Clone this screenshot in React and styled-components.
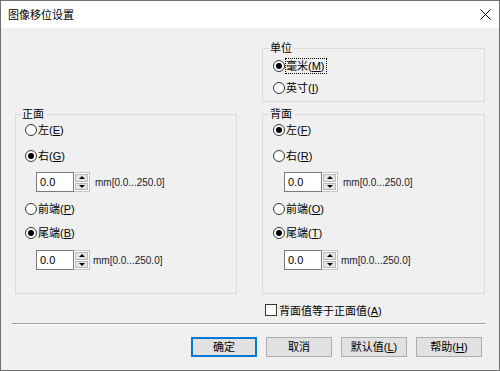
import React from "react";
import styled, { createGlobalStyle } from "styled-components";

const GlobalStyle = createGlobalStyle`
  html, body {
    margin: 0;
    padding: 0;
    background: #ffffff;
  }
  body {
    font-family: "Liberation Sans", "Noto Sans CJK SC", sans-serif;
    font-size: 11px;
    color: #000;
  }
`;

const Window = styled.div`
  width: 500px;
  height: 371px;
  box-sizing: border-box;
  border: 1px solid #707070;
  background: #f0f0f0;
  display: flex;
  flex-direction: column;
`;

const TitleBar = styled.div`
  height: 27px;
  background: #fff;
  display: flex;
  align-items: center;
  justify-content: space-between;
  padding: 0 8px 0 7px;
`;

const Title = styled.span`
  font-size: 11px;
  line-height: 14px;
`;

const Body = styled.div`
  padding: 13px 14px 0 14px;
`;

const Columns = styled.div`
  display: grid;
  grid-template-columns: 222px 223px;
  grid-template-rows: auto auto auto;
  column-gap: 25px;
  row-gap: 5px;
`;

const Group = styled.fieldset`
  margin: 0;
  min-width: 0;
  box-sizing: border-box;
  border: 1px solid #dcdcdc;
  padding: ${(p) => p.$pt}px 6px ${(p) => p.$pb}px ${(p) => p.$inset}px;
  display: flex;
  flex-direction: column;
  align-items: flex-start;
  grid-column: ${(p) => p.$col};
  grid-row: ${(p) => p.$row};
`;

const Legend = styled.legend`
  padding: 0 2px 0 1px;
  margin-left: -4px;
  line-height: 14px;
  font-size: 11px;
`;

const RadioRow = styled.div`
  display: flex;
  align-items: center;
  height: 16px;
  margin-top: ${(p) => p.$mt || 0}px;
`;

const RadioMark = styled.span`
  width: 12px;
  height: 12px;
  box-sizing: border-box;
  border: 1px solid #333;
  border-radius: 50%;
  background: #fff;
  display: flex;
  align-items: center;
  justify-content: center;
  &::after {
    content: "";
    width: 6px;
    height: 6px;
    border-radius: 50%;
    background: #000;
    display: ${(p) => (p.$checked ? "block" : "none")};
  }
`;

const OptionText = styled.span`
  margin-left: 1px;
  line-height: 14px;
  padding: 0 1px 0 0;
  outline: ${(p) => (p.$focus ? "1px dotted #000" : "none")};
  outline-offset: 0;
`;

const InputRow = styled.div`
  display: flex;
  align-items: center;
  margin-left: 11px;
  margin-top: ${(p) => p.$mt}px;
`;

const TextField = styled.div`
  width: 38px;
  height: 20px;
  box-sizing: border-box;
  border: 1px solid #7a7a7a;
  background: #fff;
  padding: 2px 3px 0;
  font-size: 11px;
  line-height: 14px;
`;

const Spinner = styled.div`
  width: 16px;
  height: 20px;
  box-sizing: border-box;
  display: flex;
  flex-direction: column;
  gap: 1px;
  padding: 1px 0;
  background: #fff;
  border: 1px solid #c5c5c5;
  border-left: none;
`;

const SpinButton = styled.div`
  flex: 1;
  margin: 0 1px;
  background: #e5e5e5;
  border: 1px solid #b9b9b9;
  display: flex;
  align-items: center;
  justify-content: center;
  &::after {
    content: "";
    border-left: 3px solid transparent;
    border-right: 3px solid transparent;
    ${(p) =>
      p.$up ? "border-bottom: 3px solid #000;" : "border-top: 3px solid #000;"}
  }
`;

const Range = styled.span`
  margin-left: ${(p) => p.$ml}px;
  font-size: 10px;
  color: #1a1a2a;
`;

const CheckRow = styled.div`
  grid-column: 2;
  grid-row: 3;
  display: flex;
  align-items: center;
  margin-top: 4px;
  margin-left: 3px;
  height: 13px;
`;

const CheckBox = styled.span`
  width: 12px;
  height: 12px;
  box-sizing: border-box;
  border: 1px solid #333;
  background: #fff;
  margin-right: 2px;
`;

const Separator = styled.div`
  margin: 7px 13px 0 11px;
  border-top: 1px solid #a0a0a0;
  border-bottom: 1px solid #ffffff;
`;

const Footer = styled.div`
  display: flex;
  justify-content: flex-end;
  gap: 9px;
  padding: 12px 17px 13px 0;
`;

const Button = styled.div`
  width: 66px;
  height: 20px;
  box-sizing: border-box;
  background: #e1e1e1;
  border: 1px solid ${(p) => (p.$primary ? "#0078d7" : "#adadad")};
  box-shadow: ${(p) => (p.$primary ? "inset 0 0 0 1px #0078d7" : "none")};
  display: flex;
  align-items: center;
  justify-content: center;
  font-size: 11px;
  line-height: 14px;
`;

const Mn = ({ k }) => (
  <>
    (<u>{k}</u>)
  </>
);

const Radio = ({ label, k, checked, focus, mt }) => (
  <RadioRow $mt={mt}>
    <RadioMark $checked={checked} />
    <OptionText $focus={focus}>
      {label}
      <Mn k={k} />
    </OptionText>
  </RadioRow>
);

const NumberInput = ({ mt, ml }) => (
  <InputRow $mt={mt}>
    <TextField>0.0</TextField>
    <Spinner>
      <SpinButton $up />
      <SpinButton />
    </Spinner>
    <Range $ml={ml}>mm[0.0...250.0]</Range>
  </InputRow>
);

const CloseIcon = () => (
  <svg width="11" height="11" viewBox="0 0 11 11">
    <path d="M0.5 0.5 L10.5 10.5 M10.5 0.5 L0.5 10.5" stroke="#000" strokeWidth="1" />
  </svg>
);

const SideGroup = ({ title, keys, col, inset, ml1, ml2 }) => (
  <Group $col={col} $row={2} $pt={1} $pb={23} $inset={inset}>
    <Legend>{title}</Legend>
    <Radio label="左" k={keys[0]} checked={col === 2} mt={0} />
    <Radio label="右" k={keys[1]} checked={col === 1} mt={10} />
    <NumberInput mt={8} ml={ml1} />
    <Radio label="前端" k={keys[2]} mt={9} />
    <Radio label="尾端" k={keys[3]} checked mt={8} />
    <NumberInput mt={9} ml={ml2} />
  </Group>
);

export default function App() {
  return (
    <>
      <GlobalStyle />
      <Window>
        <TitleBar>
          <Title>图像移位设置</Title>
          <CloseIcon />
        </TitleBar>
        <Body>
          <Columns>
            <Group $col={2} $row={1} $pt={3} $pb={5} $inset={10}>
              <Legend>单位</Legend>
              <Radio label="毫米" k="M" checked focus mt={0} />
              <Radio label="英寸" k="I" mt={6} />
            </Group>
            <SideGroup title="正面" keys={["E", "G", "P", "B"]} col={1} inset={9} ml1={5} ml2={3} />
            <SideGroup title="背面" keys={["F", "R", "O", "T"]} col={2} inset={10} ml1={5} ml2={3} />
            <CheckRow>
              <CheckBox />
              <span>
                背面值等于正面值
                <Mn k="A" />
              </span>
            </CheckRow>
          </Columns>
        </Body>
        <Separator />
        <Footer>
          <Button $primary>确定</Button>
          <Button>取消</Button>
          <Button>
            默认值
            <Mn k="L" />
          </Button>
          <Button>
            帮助
            <Mn k="H" />
          </Button>
        </Footer>
      </Window>
    </>
  );
}
